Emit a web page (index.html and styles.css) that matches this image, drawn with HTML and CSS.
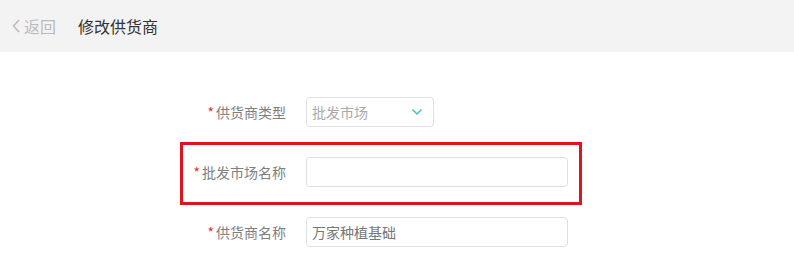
FILE: index.html
```html
<!DOCTYPE html>
<html lang="zh-CN">
<head>
    <meta charset="UTF-8">
    <meta name="viewport" content="width=device-width, initial-scale=1.0">
    <title>修改供货商</title>
    <link rel="stylesheet" href="styles.css">
</head>
<body>
    <div class="header">
        <a class="back" href="#">
            <svg class="back-icon" width="8" height="14" viewBox="0 0 8 14"><path d="M7 1L1.5 7L7 13" fill="none" stroke="#bbb" stroke-width="1.5"/></svg>
            返回
        </a>
        <span class="title">修改供货商</span>
    </div>

    <div class="form">
        <div class="row">
            <label class="label"><span class="star">*</span>供货商类型</label>
            <div class="select">
                <span>批发市场</span>
                <svg width="12" height="8" viewBox="0 0 12 8"><path d="M1.5 1.5L6 6L10.5 1.5" fill="none" stroke="#45c3c0" stroke-width="1.5"/></svg>
            </div>
        </div>
        <div class="row highlight">
            <label class="label"><span class="star">*</span>批发市场名称</label>
            <input class="input" type="text" value="">
        </div>
        <div class="row">
            <label class="label"><span class="star">*</span>供货商名称</label>
            <input class="input" type="text" value="万家种植基础">
        </div>
    </div>
</body>
</html>
```

FILE: styles.css
```css
body {
    margin: 0;
    padding: 0;
    background: #fff;
    font-family: "Noto Sans CJK SC", "Noto Sans", sans-serif;
    color: #333;
}
.header {
    height: 52px;
    background: #f3f3f3;
    display: flex;
    align-items: center;
    padding-left: 12px;
}
.back {
    display: flex;
    align-items: center;
    gap: 4px;
    color: #bbb;
    font-size: 16px;
    text-decoration: none;
    margin-right: 22px;
}
.title {
    font-size: 16px;
    color: #333;
}
.form {
    padding-top: 33px;
    margin-left: 183px;
    width: 396px;
}
.row {
    display: flex;
    align-items: flex-start;
    height: 45px;
    padding-top: 12px;
    margin-bottom: 3px;
}
.highlight {
    outline: 3px solid #e0141e;
}
.label {
    width: 103px;
    text-align: right;
    line-height: 30px;
    font-size: 14px;
    color: #808080;
    margin-right: 20px;
    white-space: nowrap;
}
.star {
    color: #e0303a;
    margin-right: 2px;
}
.select, .input {
    box-sizing: border-box;
    height: 30px;
    border: 1px solid #dcdfe6;
    border-radius: 4px;
    background: #fff;
    font-family: inherit;
    font-size: 14px;
}
.select {
    width: 128px;
    display: flex;
    align-items: center;
    justify-content: space-between;
    padding: 0 10px 0 5px;
    color: #aaa;
}
.input {
    width: 262px;
    padding: 0 5px;
    color: #777;
    outline: none;
}
```
